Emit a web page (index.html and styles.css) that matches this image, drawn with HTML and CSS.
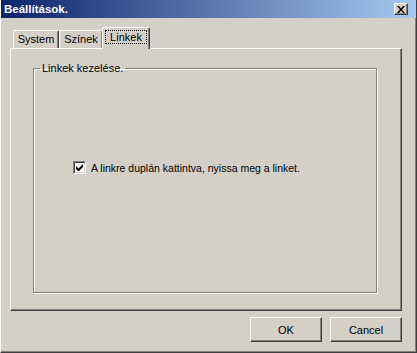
FILE: index.html
```html
<!DOCTYPE html>
<html lang="hu">

<head>
    <meta charset="UTF-8">
    <title>Beállítások.</title>
    <link rel="stylesheet" href="styles.css">
</head>

<body>
    <div class="window">
        <div class="titlebar">
            <span class="title">Beállítások.</span>
            <span class="close">
                <svg width="8" height="7" viewBox="0 0 8 7">
                    <path d="M0 0h2l2 2.5L6 0h2L5 3.5 8 7H6L4 4.5 2 7H0l3-3.5z" fill="#000" />
                </svg>
            </span>
        </div>

        <div class="content">
            <!-- fülek -->
            <div class="tabs">
                <div class="tab tab-system">System</div>
                <div class="tab tab-colors">Színek</div>
                <div class="tab tab-links active"><span class="focus">Linkek</span></div>
            </div>

            <div class="panel">
                <fieldset class="group">
                    <legend>Linkek kezelése.</legend>
                    <label class="check-row">
                        <span class="checkbox">
                            <svg width="7" height="7" viewBox="0 0 7 7">
                                <path d="M0 2v3l2 2h1l4-4V0L2.5 4.5z" fill="#000" />
                            </svg>
                        </span>
                        A linkre duplán kattintva, nyissa meg a linket.
                    </label>
                </fieldset>
            </div>

            <div class="buttons">
                <button class="btn">OK</button>
                <button class="btn">Cancel</button>
            </div>
        </div>
    </div>
</body>

</html>
```

FILE: styles.css
```css
body {
    margin: 0;
    background: #d4d0c8;
    font-family: "Liberation Sans", Arial, sans-serif;
    font-size: 11px;
    color: #000;
}

.window {
    width: 417px;
    height: 353px;
    box-sizing: border-box;
    background: #d4d0c8;
    border-left: 1px solid #fff;
    border-right: 1px solid #404040;
    border-bottom: 1px solid #404040;
    box-shadow: inset -1px -1px 0 #808080;
    display: flex;
    flex-direction: column;
}

.titlebar {
    height: 18px;
    flex-shrink: 0;
    background: linear-gradient(90deg, #0a246a, #a6caf0);
    display: flex;
    align-items: center;
    justify-content: space-between;
    padding: 0 8px 0 3px;
}

.title {
    color: #fff;
    font-weight: bold;
    font-size: 11.5px;
}

.close {
    width: 14px;
    height: 12px;
    box-sizing: border-box;
    background: #d4d0c8;
    border-top: 1px solid #fff;
    border-left: 1px solid #fff;
    border-right: 1px solid #404040;
    border-bottom: 1px solid #404040;
    box-shadow: inset -1px -1px 0 #808080;
    display: flex;
    align-items: center;
    justify-content: center;
}

.content {
    padding: 9px 14px 0 9px;
}

.tabs {
    display: flex;
    align-items: flex-end;
    height: 21px;
    padding-left: 3px;
}

.tab {
    height: 18px;
    box-sizing: border-box;
    padding-top: 2px;
    text-align: center;
    border-top: 1px solid #fff;
    border-left: 1px solid #fff;
    border-right: 1px solid #404040;
    border-radius: 2px 2px 0 0;
    box-shadow: inset -1px 0 0 #808080;
    font-size: 11px;
}

.tab-system {
    width: 46px;
}

.tab-colors {
    width: 44px;
}

.tab.active {
    position: relative;
    width: 48px;
    margin-left: -1px;
    margin-bottom: -1px;
    height: 22px;
    padding-top: 3px;
    background: #d4d0c8;
    z-index: 1;
}

.focus {
    outline: 1px dotted #000;
    padding: 0 4px;
}

.panel {
    height: 263px;
    box-sizing: border-box;
    border-top: 1px solid #fff;
    border-left: 1px solid #fff;
    border-right: 1px solid #404040;
    border-bottom: 1px solid #404040;
    box-shadow: inset -1px -1px 0 #808080;
    padding: 13px 24px 0 22px;
}

.group {
    margin: 0;
    height: 231px;
    box-sizing: border-box;
    border: 1px solid #808080;
    box-shadow: 1px 1px 0 #fff, inset 1px 1px 0 #fff;
    padding: 0;
}

.group legend {
    padding: 0 2px;
    margin-left: 6px;
    font-size: 11px;
}

.check-row {
    display: flex;
    align-items: center;
    gap: 5px;
    margin: 87px 0 0 39px;
    font-size: 10.5px;
}

.checkbox {
    width: 13px;
    height: 13px;
    box-sizing: border-box;
    background: #fff;
    border-top: 1px solid #808080;
    border-left: 1px solid #808080;
    border-right: 1px solid #fff;
    border-bottom: 1px solid #fff;
    box-shadow: inset 1px 1px 0 #404040, inset -1px -1px 0 #d4d0c8;
    display: flex;
    align-items: center;
    justify-content: center;
}

.buttons {
    display: flex;
    justify-content: flex-end;
    gap: 8px;
    margin-top: 6px;
}

.btn {
    width: 72px;
    height: 25px;
    box-sizing: border-box;
    background: #d4d0c8;
    font-family: "Liberation Sans", Arial, sans-serif;
    font-size: 11px;
    color: #000;
    border-top: 1px solid #fff;
    border-left: 1px solid #fff;
    border-right: 1px solid #404040;
    border-bottom: 1px solid #404040;
    box-shadow: inset -1px -1px 0 #808080;
    padding: 0;
}
```
